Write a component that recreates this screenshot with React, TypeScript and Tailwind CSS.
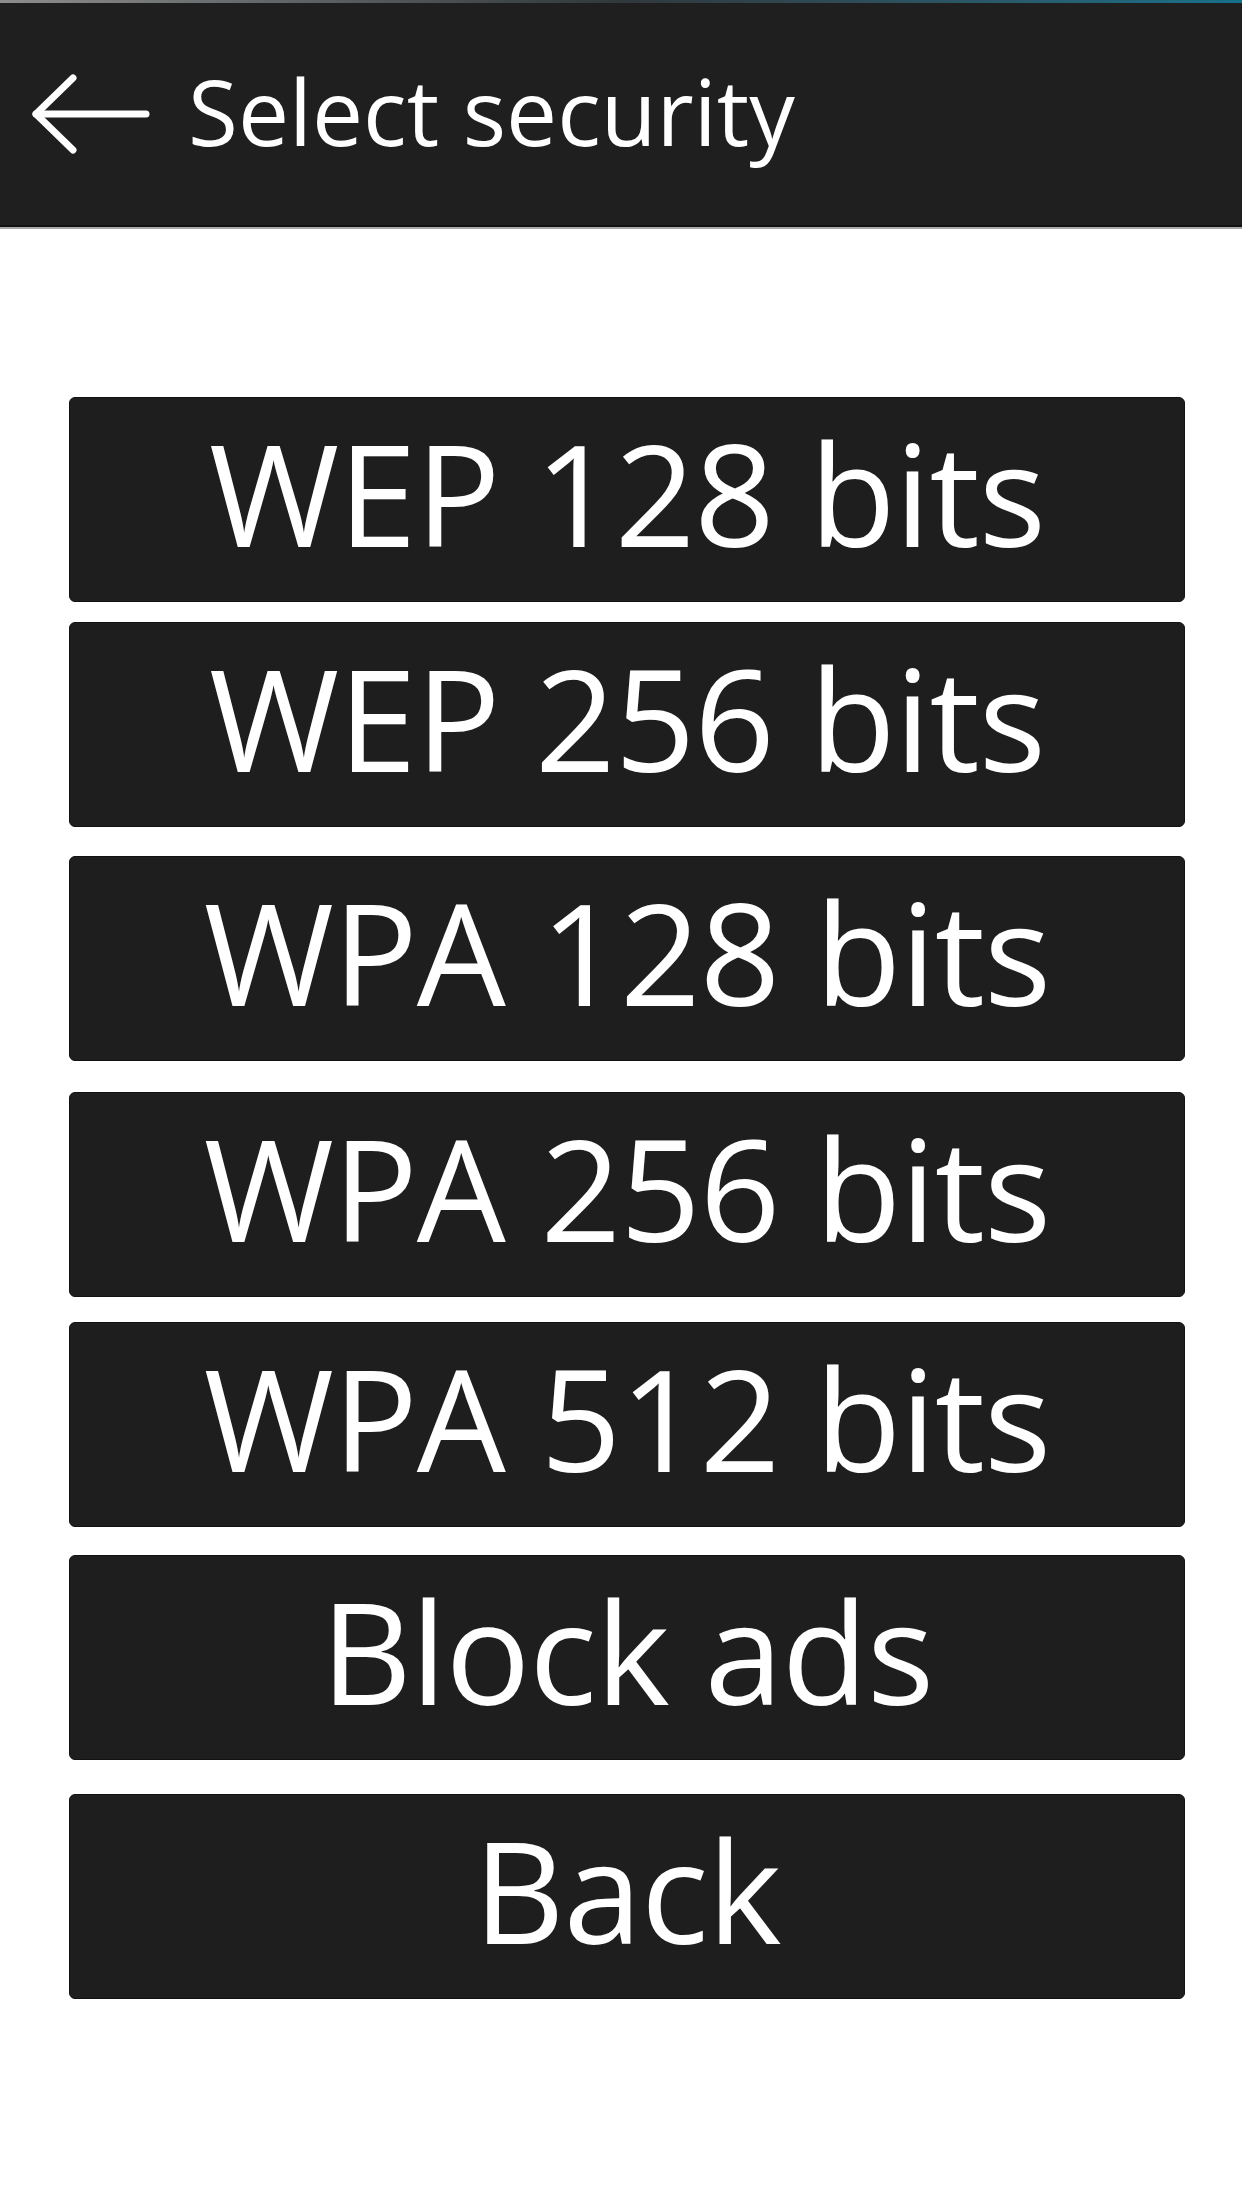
const options = [
  { label: "WEP 128 bits", gap: "mt-[168px]" },
  { label: "WEP 256 bits", gap: "mt-[20px]" },
  { label: "WPA 128 bits", gap: "mt-[29px]" },
  { label: "WPA 256 bits", gap: "mt-[31px]" },
  { label: "WPA 512 bits", gap: "mt-[25px]" },
  { label: "Block ads", gap: "mt-[28px]" },
  { label: "Back", gap: "mt-[34px]" },
];

function BackArrow() {
  return (
    <svg width="130" height="90" viewBox="0 0 130 90" className="shrink-0">
      <g fill="none" stroke="#ffffff" strokeWidth="7" strokeLinecap="round" strokeLinejoin="round">
        <path d="M53 9 L16 45 L53 81" />
        <path d="M16 45 L126 45" />
      </g>
    </svg>
  );
}

export default function App() {
  return (
    <div className="w-[1242px] h-[2208px] bg-white overflow-hidden font-['Open_Sans','Noto_Sans',sans-serif]">
      {/* status strip above the title bar */}
      <div className="h-[3px] bg-gradient-to-r from-[#8d8d8d] via-[#30383c] to-[#15708a]" />

      {/* title bar */}
      <header className="h-[222px] bg-[#1f1f1f] flex items-center pl-[20px]">
        <BackArrow />
        <h1 className="ml-[38px] text-white text-[91px] leading-none tracking-[0px] pb-[6px]">
          Select security
        </h1>
      </header>
      <div className="h-[2px] bg-[#121212]" />
      <div className="h-[2px] bg-[#a8a8a8]" />

      {/* security choices */}
      <div className="flex flex-col ml-[69px] w-[1116px]">
        {options.map((o) => (
          <button
            key={o.label}
            className={`${o.gap} h-[205px] rounded-[6px] bg-[#1e1e1e] border border-[#121212] flex items-center justify-center pb-[14px] text-white text-[141px] leading-none tracking-[-1px]`}
          >
            {o.label}
          </button>
        ))}
      </div>
    </div>
  );
}
